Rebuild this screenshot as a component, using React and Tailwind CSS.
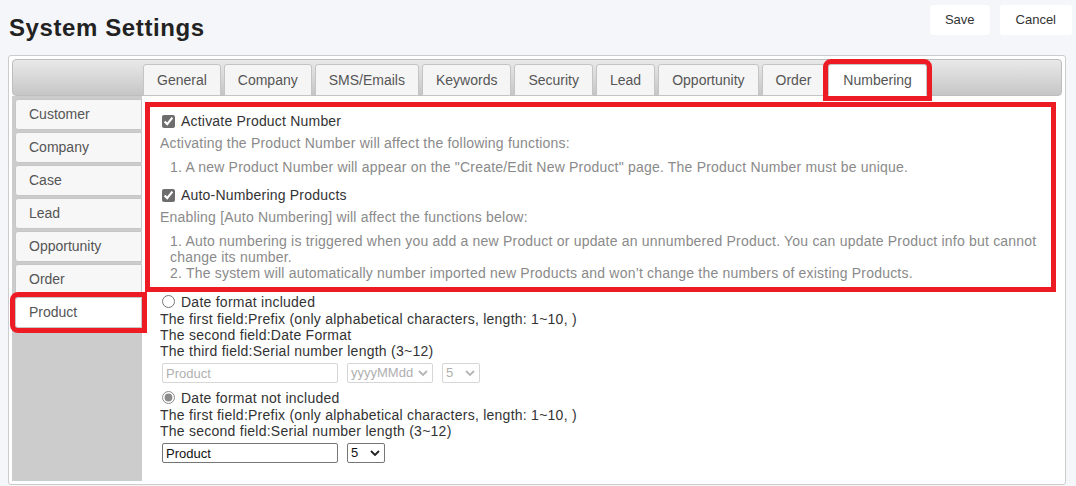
import { useState } from "react";

const tabs = ["General", "Company", "SMS/Emails", "Keywords", "Security", "Lead", "Opportunity", "Order", "Numbering"];
const sideItems = ["Customer", "Company", "Case", "Lead", "Opportunity", "Order", "Product"];

const Chevron = ({ color }) => (
  <svg width="10" height="6" viewBox="0 0 10 6" className="absolute right-[5px] top-1/2 -translate-y-1/2 pointer-events-none">
    <path d="M1 1l4 4 4-4" fill="none" stroke={color} strokeWidth="1.8" />
  </svg>
);

const Select = ({ value, options, width, disabled }) => (
  <div className={`relative h-[20px] ${width}`}>
    <select
      defaultValue={value}
      disabled={disabled}
      className={`appearance-none w-full h-full rounded-[2px] pl-[3px] text-[13px] leading-[18px] bg-white border ${
        disabled ? "border-[#d6d6d6] text-[#b0b0b0]" : "border-[#767676] text-[#111]"
      }`}
    >
      {options.map((o) => (
        <option key={o}>{o}</option>
      ))}
    </select>
    <Chevron color={disabled ? "#b5b5b5" : "#222"} />
  </div>
);

const App = () => {
  const [tab, setTab] = useState("Numbering");
  const [side, setSide] = useState("Product");
  const [withDate, setWithDate] = useState(false);

  return (
    <div className="min-h-[486px] w-full bg-[#f5f6fa] font-['Liberation_Sans',Arial,sans-serif] text-[#333]">
      <div className="flex items-start justify-between h-[55px]">
        <h1 className="ml-[9px] mt-[12px] text-[24px] leading-[32px] font-bold tracking-[0.6px] text-[#222]">System Settings</h1>
        <div className="flex gap-[10px] mt-[5px] mr-[4px]">
          <button className="h-[30px] px-[15px] bg-white rounded-[3px] text-[13px] text-[#333]">Save</button>
          <button className="h-[30px] px-[16px] bg-white rounded-[3px] text-[13px] text-[#333]">Cancel</button>
        </div>
      </div>

      <div className="ml-[8px] mr-[10px] h-[430px] border border-[#cccccc] rounded-[3px] bg-white p-[3px] flex flex-col">
        <div className="h-[37px] shrink-0 rounded-[4px] border border-[#bdbdbd] bg-linear-to-b from-[#e9e9e9] to-[#c6c6c6] flex items-end pl-[130px] gap-[3px]">
          {tabs.map((t) => (
            <button
              key={t}
              onClick={() => setTab(t)}
              className={`h-[32px] -mb-px border rounded-t-[3px] text-[14px] text-[#555] flex items-center ${
                tab === t
                  ? "px-[14px] bg-white border-[#c4c4c4] border-b-white relative z-10 outline-[5px] outline-solid outline-[#ed1c24]"
                  : "px-[13px] bg-[#f5f5f5] border-[#c4c4c4]"
              }`}
            >
              {t}
            </button>
          ))}
        </div>

        <div className="flex flex-1 min-h-0">
          <div className="w-[130px] shrink-0 bg-[#cccccc] pt-[3px] pl-[3px] flex flex-col gap-[2px]">
            {sideItems.map((s) => (
              <button
                key={s}
                onClick={() => setSide(s)}
                className={`h-[31px] shrink-0 pl-[13px] text-left text-[14px] text-[#555] border border-[#c6c6c6] rounded-l-[3px] ${
                  side === s ? "bg-white relative z-10 outline-[5px] outline-solid outline-[#ed1c24]" : "bg-[#f7f7f7]"
                }`}
              >
                {s}
              </button>
            ))}
          </div>

          <div className="flex-1 pt-[6px] pl-[3px] pr-[6px] text-[14px]">
            <div className="border-[5px] border-[#ed1c24] px-[10px] pt-[4px] pb-[6px] tracking-[0.2px]">
              <label className="h-[20px] flex items-center">
                <input type="checkbox" defaultChecked className="m-0 ml-[2px] w-[13px] h-[13px] accent-[#6d6d6d]" />
                <span className="ml-[6px] text-[#333]">Activate Product Number</span>
              </label>
              <p className="mt-[4px] leading-[16px] text-[#8a8a8a]">Activating the Product Number will affect the following functions:</p>
              <p className="mt-[8px] pl-[10px] leading-[16px] text-[#8a8a8a]">
                1. A new Product Number will appear on the "Create/Edit New Product" page. The Product Number must be unique.
              </p>
              <label className="mt-[10px] h-[20px] flex items-center">
                <input type="checkbox" defaultChecked className="m-0 ml-[2px] w-[13px] h-[13px] accent-[#6d6d6d]" />
                <span className="ml-[6px] text-[#333]">Auto-Numbering Products</span>
              </label>
              <p className="mt-[4px] leading-[16px] text-[#8a8a8a]">Enabling [Auto Numbering] will affect the functions below:</p>
              <div className="mt-[8px] pl-[10px] leading-[16px] text-[#8a8a8a]">
                <p>
                  1. Auto numbering is triggered when you add a new Product or update an unnumbered Product. You can update Product info but cannot change its number.
                </p>
                <p>2. The system will automatically number imported new Products and won’t change the numbers of existing Products.</p>
              </div>
            </div>

            <div className="pl-[15px] leading-[16px] tracking-[0.25px] text-[#333]">
              <label className="h-[19px] flex items-center">
                <input
                  type="radio"
                  name="fmt"
                  checked={withDate}
                  onChange={() => setWithDate(true)}
                  className="m-0 ml-[2px] w-[13px] h-[13px] accent-[#8c8c8c]"
                />
                <span className="ml-[6px]">Date format included</span>
              </label>
              <p>The first field:Prefix (only alphabetical characters, length: 1~10, )</p>
              <p>The second field:Date Format</p>
              <p>The third field:Serial number length (3~12)</p>
              <div className="mt-[4px] ml-[2px] flex items-center gap-[9px] tracking-normal">
                <input
                  disabled
                  defaultValue="Product"
                  className="w-[176px] h-[20px] px-[3px] text-[13px] border border-[#d6d6d6] rounded-[2px] text-[#b0b0b0] bg-white"
                />
                <Select value="yyyyMMdd" options={["yyyyMMdd", "yyMMdd", "yyyyMM"]} width="w-[86px]" disabled />
                <Select value="5" options={["3", "4", "5", "6", "7", "8", "9", "10", "11", "12"]} width="w-[38px]" disabled />
              </div>

              <label className="mt-[5px] h-[19px] flex items-center">
                <input
                  type="radio"
                  name="fmt"
                  checked={!withDate}
                  onChange={() => setWithDate(false)}
                  className="m-0 ml-[2px] w-[13px] h-[13px] accent-[#8c8c8c]"
                />
                <span className="ml-[6px]">Date format not included</span>
              </label>
              <p>The first field:Prefix (only alphabetical characters, length: 1~10, )</p>
              <p>The second field:Serial number length (3~12)</p>
              <div className="mt-[4px] ml-[2px] flex items-center gap-[9px] tracking-normal">
                <input
                  defaultValue="Product"
                  className="w-[176px] h-[20px] px-[3px] text-[13px] border border-[#767676] rounded-[2px] text-[#111] bg-white"
                />
                <Select value="5" options={["3", "4", "5", "6", "7", "8", "9", "10", "11", "12"]} width="w-[38px]" />
              </div>
            </div>
          </div>
        </div>
      </div>
    </div>
  );
};

export default App;
